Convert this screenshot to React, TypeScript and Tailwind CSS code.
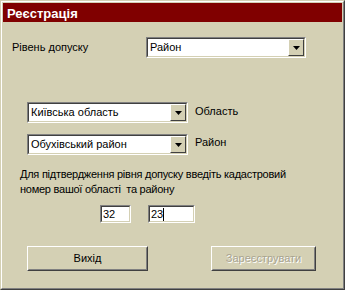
import React from "react";

const BG = "bg-[#D4D0B4]";

const Arrow = () => (
  <div className={`w-[16px] h-full ${BG} border border-t-white border-l-white border-r-[#404040] border-b-[#404040] flex items-center justify-center`}>
    <svg width="7" height="4" viewBox="0 0 7 4"><path d="M0 0h7L3.5 4z" fill="#000" /></svg>
  </div>
);

const Combo = ({ text, w }: { text: string; w: string }) => (
  <div className={`${w} h-[21px] border border-t-[#808080] border-l-[#808080] border-r-white border-b-white`}>
    <div className="h-full border border-t-[#404040] border-l-[#404040] border-r-[#D4D0B4] border-b-[#D4D0B4] bg-white flex items-stretch">
      <div className="flex-1 pl-[2px] flex items-center text-[11px] leading-none text-black">{text}</div>
      <Arrow />
    </div>
  </div>
);

const Input = ({ text, w, caret }: { text: string; w: string; caret?: boolean }) => (
  <div className={`${w} h-[18px] border border-t-[#808080] border-l-[#808080] border-r-white border-b-white`}>
    <div className="h-full border border-t-[#404040] border-l-[#404040] border-r-[#D4D0B4] border-b-[#D4D0B4] bg-white flex items-center pl-[1px] text-[11px] leading-none text-black">
      {text}
      {caret && <span className="inline-block w-[1px] h-[13px] bg-black" />}
    </div>
  </div>
);

const Button = ({ text, w, disabled }: { text: string; w: string; disabled?: boolean }) => (
  <div className={`${w} h-[25px] border border-t-white border-l-white border-r-[#404040] border-b-[#404040]`}>
    <div className="h-full border border-t-[#D4D0B4] border-l-[#D4D0B4] border-r-[#808080] border-b-[#808080] flex items-center justify-center text-[11px] leading-none">
      {disabled ? (
        <span className="text-[#A8A490] [text-shadow:1px_1px_0_#ffffff]">{text}</span>
      ) : (
        <span className="text-black">{text}</span>
      )}
    </div>
  </div>
);

export default function App() {
  return (
    <div
      className={`w-[345px] h-[290px] ${BG} border border-t-[#D4D0B4] border-l-[#D4D0B4] border-r-[#404040] border-b-[#404040]`}
      style={{ fontFamily: '"Liberation Sans", Arial, sans-serif' }}
    >
      <div className="h-full border border-t-white border-l-white border-r-[#808080] border-b-[#808080] p-[1px] flex flex-col">
        <div className="h-[19px] bg-[#800000] flex items-center pl-[4px] pt-[1px] text-white font-bold text-[13px] leading-none">
          Реєстрація
        </div>
        <div className="flex flex-col text-[11px] text-black">
          <div className="flex items-start mt-[15px]">
            <div className="ml-[9px] w-[134px] pt-[2px]">Рівень допуску</div>
            <Combo text="Район" w="w-[160px]" />
          </div>
          <div className="flex items-start mt-[44px] ml-[24px]">
            <Combo text="Київська область" w="w-[161px]" />
            <div className="ml-[7px] pt-[1px]">Область</div>
          </div>
          <div className="flex items-start mt-[11px] ml-[24px]">
            <Combo text="Обухівський район" w="w-[161px]" />
            <div className="ml-[7px]">Район</div>
          </div>
          <div className="ml-[17px] mt-[12px] leading-[15px] tracking-[-0.25px]">
            Для підтвердження рівня допуску введіть кадастровий
            <br />
            номер вашої області&nbsp; та району
          </div>
          <div className="flex mt-[8px] ml-[97px] gap-[17px]">
            <Input text="32" w="w-[31px]" />
            <Input text="23" w="w-[47px]" caret />
          </div>
          <div className="flex mt-[23px] ml-[24px]">
            <Button text="Вихід" w="w-[121px]" />
            <div className="ml-[63px]">
              <Button text="Зареєструвати" w="w-[105px]" disabled />
            </div>
          </div>
        </div>
      </div>
    </div>
  );
}
